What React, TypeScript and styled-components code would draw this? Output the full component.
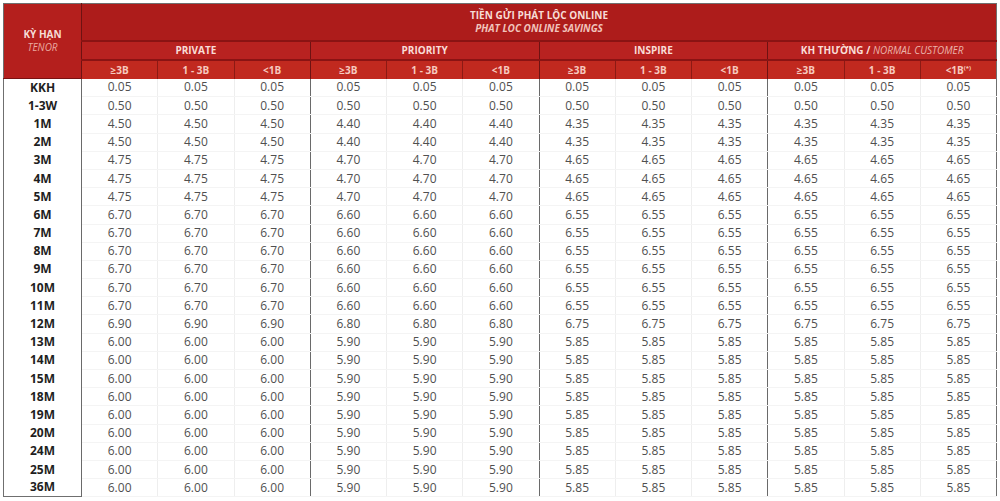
import React from "react";
import styled, { createGlobalStyle } from "styled-components";

const GlobalStyle = createGlobalStyle`
  html, body {
    margin: 0;
    padding: 0;
    background: #ffffff;
  }
  body {
    font-family: "Open Sans", "Liberation Sans", sans-serif;
  }
`;

type Row = { tenor: string; rates: [string, string, string, string] };

const rows: Row[] = [
  { tenor: "KKH", rates: ["0.05", "0.05", "0.05", "0.05"] },
  { tenor: "1-3W", rates: ["0.50", "0.50", "0.50", "0.50"] },
  { tenor: "1M", rates: ["4.50", "4.40", "4.35", "4.35"] },
  { tenor: "2M", rates: ["4.50", "4.40", "4.35", "4.35"] },
  { tenor: "3M", rates: ["4.75", "4.70", "4.65", "4.65"] },
  { tenor: "4M", rates: ["4.75", "4.70", "4.65", "4.65"] },
  { tenor: "5M", rates: ["4.75", "4.70", "4.65", "4.65"] },
  { tenor: "6M", rates: ["6.70", "6.60", "6.55", "6.55"] },
  { tenor: "7M", rates: ["6.70", "6.60", "6.55", "6.55"] },
  { tenor: "8M", rates: ["6.70", "6.60", "6.55", "6.55"] },
  { tenor: "9M", rates: ["6.70", "6.60", "6.55", "6.55"] },
  { tenor: "10M", rates: ["6.70", "6.60", "6.55", "6.55"] },
  { tenor: "11M", rates: ["6.70", "6.60", "6.55", "6.55"] },
  { tenor: "12M", rates: ["6.90", "6.80", "6.75", "6.75"] },
  { tenor: "13M", rates: ["6.00", "5.90", "5.85", "5.85"] },
  { tenor: "14M", rates: ["6.00", "5.90", "5.85", "5.85"] },
  { tenor: "15M", rates: ["6.00", "5.90", "5.85", "5.85"] },
  { tenor: "18M", rates: ["6.00", "5.90", "5.85", "5.85"] },
  { tenor: "19M", rates: ["6.00", "5.90", "5.85", "5.85"] },
  { tenor: "20M", rates: ["6.00", "5.90", "5.85", "5.85"] },
  { tenor: "24M", rates: ["6.00", "5.90", "5.85", "5.85"] },
  { tenor: "25M", rates: ["6.00", "5.90", "5.85", "5.85"] },
  { tenor: "36M", rates: ["6.00", "5.90", "5.85", "5.85"] },
];

const Page = styled.div`
  padding: 3px 3px 0 3px;
`;

const Table = styled.table`
  width: 994px;
  table-layout: fixed;
  border-collapse: collapse;
  border: 1px solid #6f6f6f;
`;

const TenorHead = styled.th`
  width: 78px;
  background: #b41f1d;
  border-right: 1px solid #6e1212;
  border-bottom: 1px solid #7a1212;
  color: #f6dcd6;
  font-size: 10px;
  font-weight: 700;
  line-height: 13px;
  padding: 0;
  text-align: center;
  vertical-align: middle;

  em {
    display: block;
    font-weight: 400;
    font-style: italic;
    color: #eaaaa0;
  }
`;

const TitleRow = styled.tr`
  height: 37px;
`;

const TitleHead = styled.th`
  background: #ad1c1b;
  border-bottom: 2px solid #8a1313;
  color: #f7dcd6;
  font-size: 10px;
  font-weight: 700;
  line-height: 13px;
  padding: 0;
  text-align: center;

  em {
    display: block;
    font-style: italic;
    color: #f1c4bc;
  }
`;

const GroupRow = styled.tr`
  height: 19px;
`;

const GroupHead = styled.th<{ $first?: boolean }>`
  background: #b82220;
  border-left: ${({ $first }) => ($first ? "none" : "1px solid #6e1212")};
  border-bottom: 2px solid #8a1313;
  color: #f8ddd7;
  font-size: 10px;
  font-weight: 700;
  line-height: 12px;
  padding: 0;
  text-align: center;

  i {
    font-weight: 400;
    color: #eab3aa;
  }
`;

const TierRow = styled.tr`
  height: 19px;
`;

const TierHead = styled.th<{ $groupStart?: boolean }>`
  background: #c1291f;
  border-left: ${({ $groupStart }) =>
    $groupStart ? "1px solid #6e1212" : "1px solid #8c1a14"};
  color: #f6c9bf;
  font-size: 10px;
  font-weight: 700;
  line-height: 12px;
  padding: 0;
  text-align: center;

  sup {
    font-size: 6px;
    line-height: 0;
  }
`;

const BodyRow = styled.tr`
  height: 18.2px;
`;

const TenorCell = styled.td`
  border-right: 1px solid #6a6a6a;
  color: #1e1e1e;
  font-size: 12px;
  font-weight: 700;
  padding: 0;
  text-align: center;
  line-height: 14px;
`;

const RateCell = styled.td<{ $groupStart?: boolean }>`
  border-left: ${({ $groupStart }) =>
    $groupStart ? "1px solid #6a6a6a" : "1px solid #eeeeee"};
  border-bottom: 1px solid #f4f4f4;
  color: #505050;
  font-size: 12px;
  padding: 0;
  text-align: center;
  line-height: 14px;
`;

const groups = ["PRIVATE", "PRIORITY", "INSPIRE"];
const tiers = ["≥3B", "1 - 3B", "<1B"];

export default function App() {
  return (
    <Page>
      <GlobalStyle />
      <Table>
        <colgroup>
          <col style={{ width: 78 }} />
          {Array.from({ length: 12 }).map((_, i) => (
            <col key={i} />
          ))}
        </colgroup>
        <thead>
          <TitleRow>
            <TenorHead rowSpan={3}>
              KỲ HẠN
              <em>TENOR</em>
            </TenorHead>
            <TitleHead colSpan={12}>
              TIỀN GỬI PHÁT LỘC ONLINE
              <em>PHAT LOC ONLINE SAVINGS</em>
            </TitleHead>
          </TitleRow>
          <GroupRow>
            {groups.map((g, i) => (
              <GroupHead key={g} colSpan={3} $first={i === 0}>
                {g}
              </GroupHead>
            ))}
            <GroupHead colSpan={3}>
              KH THƯỜNG / <i>NORMAL CUSTOMER</i>
            </GroupHead>
          </GroupRow>
          <TierRow>
            {[0, 1, 2, 3].map((g) =>
              tiers.map((t, i) => (
                <TierHead key={`${g}-${t}`} $groupStart={i === 0 && g > 0}>
                  {g === 3 && i === 2 ? (
                    <>
                      {"<1B"}
                      <sup>(*)</sup>
                    </>
                  ) : (
                    t
                  )}
                </TierHead>
              ))
            )}
          </TierRow>
        </thead>
        <tbody>
          {rows.map((r) => (
            <BodyRow key={r.tenor}>
              <TenorCell>{r.tenor}</TenorCell>
              {r.rates.map((rate, g) =>
                [0, 1, 2].map((i) => (
                  <RateCell key={`${g}-${i}`} $groupStart={i === 0 && g > 0}>
                    {rate}
                  </RateCell>
                ))
              )}
            </BodyRow>
          ))}
        </tbody>
      </Table>
    </Page>
  );
}
